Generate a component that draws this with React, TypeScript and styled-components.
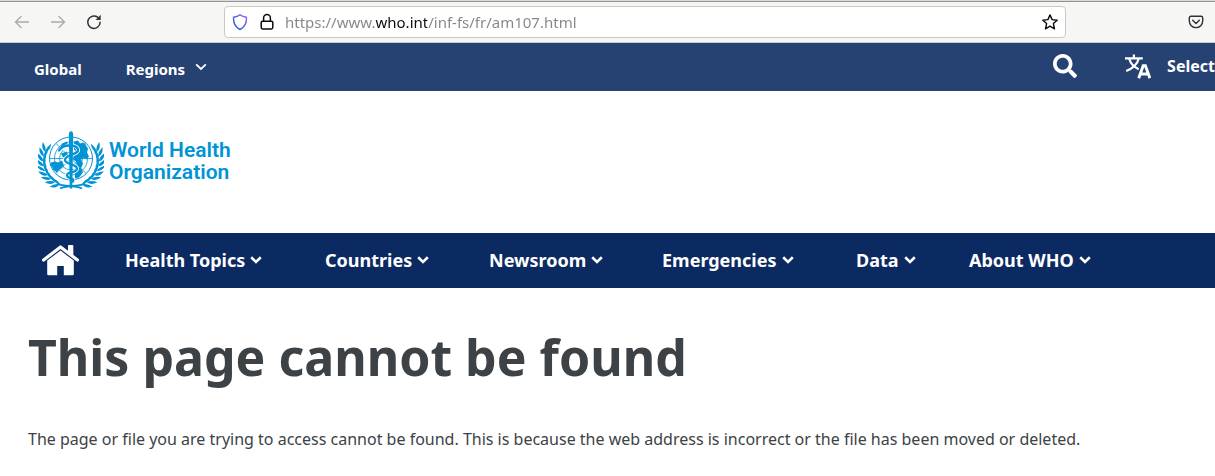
import React from "react";
import styled, { createGlobalStyle } from "styled-components";
import { FaSearch } from "react-icons/fa";

const GlobalStyle = createGlobalStyle`
  * { box-sizing: border-box; }
  body {
    margin: 0;
    background: #fff;
    color: #3c4245;
    font-family: "Noto Sans", "Open Sans", sans-serif;
    font-size: 16px;
    overflow-x: hidden;
  }
`;

const TabStrip = styled.div`
  height: 2px;
  background: #dedad7;
  border-bottom: 1px solid #979391;
`;

const Toolbar = styled.div`
  display: flex;
  align-items: center;
  height: 41px;
  padding: 0 10px 0 13px;
  background: #f6f6f4;
  border-bottom: 1px solid #cfcac4;
`;

const ToolGroup = styled.div`
  display: flex;
  gap: 18px;
  flex: 0 0 211px;
`;

const IconButton = styled.button<{ $color?: string }>`
  display: flex;
  padding: 0;
  border: 0;
  background: none;
  color: ${(p) => p.$color ?? "#2e3436"};
`;

const AddressBar = styled.form`
  display: flex;
  align-items: center;
  flex: 1;
  gap: 9px;
  height: 32px;
  padding: 0 6px;
  background: #fff;
  border: 1px solid #cdc7c2;
  border-radius: 4px;
`;

const AddressInput = styled.input`
  flex: 1;
  min-width: 0;
  height: 28px;
  padding: 0;
  border: 0;
  outline: 0;
  color: transparent;
  background: linear-gradient(90deg, #858585 90px, #0c0c0d 90px 142px, #858585 142px);
  background-clip: text;
  -webkit-background-clip: text;
  font: 15px "Noto Sans", sans-serif;
`;

const ToolEnd = styled.div`
  display: flex;
  justify-content: flex-end;
  flex: 0 0 139px;
`;

const TopBar = styled.div`
  display: flex;
  align-items: center;
  height: 48px;
  padding-left: 34px;
  background: #264273;
  color: #fff;
`;

const TopLinks = styled.nav`
  display: flex;
  align-items: center;
  gap: 44px;
  padding-top: 4px;
  font-size: 15px;
  font-weight: 700;
`;

const TopLink = styled.a`
  display: flex;
  color: inherit;
  text-decoration: none;
`;

const MenuButton = styled.button<{ $gap: number }>`
  display: flex;
  align-items: center;
  gap: ${(p) => p.$gap}px;
  padding: 0;
  border: 0;
  background: none;
  color: inherit;
  font: inherit;
  white-space: nowrap;
`;

const TopActions = styled.div`
  display: flex;
  align-items: center;
  gap: 48px;
  margin-left: auto;
  padding-bottom: 2px;
  font-size: 16px;
  font-weight: 700;
`;

const Header = styled.header`
  height: 142px;
  padding: 40px 38px;
`;

const LogoLink = styled.a`
  display: inline-flex;
  gap: 5px;
  color: #0093d5;
  text-decoration: none;
`;

const LogoText = styled.span`
  padding-top: 8px;
  font: 600 21px/22px Roboto, "Open Sans", sans-serif;
  white-space: nowrap;
`;

const MainNav = styled.nav`
  display: grid;
  grid-template-columns: 83px 200px 164px 173px 194px 113px auto;
  align-items: center;
  height: 55px;
  padding-left: 42px;
  background: #0c2a62;
  color: #fff;
  font-size: 18px;
  line-height: 24px;
  font-weight: 700;

  button {
    padding-bottom: 2px;
  }
`;

const Content = styled.main`
  padding: 35px 28px;
`;

const Title = styled.h1`
  margin: 0;
  font-size: 50px;
  line-height: 68px;
  font-weight: 700;
`;

const Message = styled.p`
  margin: 37px 0 0;
  line-height: 22px;
`;

const Chevron = ({ bold }: { bold?: boolean }) => (
  <svg
    width="12"
    height="12"
    viewBox={bold ? "0 -2 12 12" : "0 0 12 12"}
    fill="none"
    stroke="currentColor"
    strokeWidth={bold ? 2.6 : 1.8}
    aria-hidden="true"
  >
    <path d="M1.2 1.3 6 6l4.8-4.7" />
  </svg>
);

const Arrow = ({ back }: { back?: boolean }) => (
  <svg width="18" height="16" viewBox="0 0 18 16" fill="none" stroke="currentColor" strokeWidth="1.3" strokeLinecap="round" aria-hidden="true">
    <path d={back ? "M15.5 8H2.5M8 2.5 2.5 8 8 13.5" : "M2.5 8h13M10 2.5 15.5 8 10 13.5"} />
  </svg>
);

const Reload = () => (
  <svg width="18" height="16" viewBox="0 0 18 16" aria-hidden="true">
    <path d="M15.1 8.2A6.2 6.2 0 1 1 12.6 3.2" fill="none" stroke="currentColor" strokeWidth="1.5" strokeLinecap="round" />
    <path d="M15.7.8v5.1h-5.1z" fill="currentColor" />
  </svg>
);

const Shield = () => (
  <svg width="18" height="18" viewBox="0 0 18 18" aria-hidden="true">
    <defs>
      <linearGradient id="shield" x1="0" y1="1" x2="1" y2="0">
        <stop offset="0.2" stopColor="#2b62cf" />
        <stop offset="1" stopColor="#9d5cff" />
      </linearGradient>
    </defs>
    <path d="M9 1.8C7.4 3.1 5 4 2.5 4.3c-.2 5 1 9.700 6.500 12.200 5.500-2.500 6.700-7.200 6.500-12.200C13 4 10.600 3.100 9 1.800z" fill="none" stroke="url(#shield)" strokeWidth="1.4" strokeLinejoin="round" />
  </svg>
);

const Lock = () => (
  <svg width="18" height="18" viewBox="0 0 18 18" fill="none" stroke="#0c0c0d" strokeWidth="1.5" aria-hidden="true">
    <rect x="3.2" y="8.2" width="11.6" height="7.8" rx="1.4" />
    <path d="M5.6 8V5a3.4 3.4 0 0 1 6.8 0v3" />
  </svg>
);

const Star = () => (
  <svg width="18" height="18" viewBox="0 0 18 18" fill="none" stroke="#0c0c0d" strokeWidth="1.4" strokeLinejoin="round" aria-hidden="true">
    <path d="M9 1.9l2.1 4.7 5.1.6-3.8 3.4 1.1 5.2L9 13.2l-4.5 2.6 1.1-5.2L1.8 7.2l5.1-.6z" />
  </svg>
);

const Pocket = () => (
  <svg width="18" height="16" viewBox="0 0 18 16" fill="none" stroke="currentColor" strokeWidth="1.4" strokeLinecap="round" strokeLinejoin="round" aria-hidden="true">
    <path d="M4 2.2h10a1.7 1.7 0 0 1 1.7 1.7v3a6.7 6.7 0 0 1-13.4 0v-3A1.7 1.7 0 0 1 4 2.2z" />
    <path d="M5.7 6.2 9 9.4l3.3-3.2" />
  </svg>
);

const Translate = () => (
  <svg width="26" height="25" viewBox="0 0 26 25" fill="none" stroke="currentColor" aria-hidden="true">
    <path d="M0 4.3h17.8M8.9.4v3.9M13.8 4.5C12.5 9.5 7.5 14.5 1.2 17M4.3 5c1.5 5 4.7 8 9.4 10.2" strokeWidth="2.2" />
    <path d="M13.7 24.2 18.2 11.7h2.2l4.5 12.5M15.3 20h8" strokeWidth="2.9" />
  </svg>
);

const House = () => (
  <svg width="37" height="31" viewBox="0 0 37 31" fill="currentColor" aria-hidden="true">
    <path d="M1.6 15 18.5 2 35.4 15" fill="none" stroke="currentColor" strokeWidth="3.2" strokeLinecap="round" strokeLinejoin="round" />
    <path d="M26 .8q0-.8.8-.8h3.7q.8 0 .8.8v10.5L26 7.2z" />
    <path d="M5.2 15.5 18.5 5.6 31.8 15.5V29q0 1.3-1.3 1.3h-8.7v-9.2h-6.6v9.2H6.500q-1.300 0-1.300-1.300z" />
  </svg>
);

/* Nodes along the laurel stem, as angles clockwise from the right. */
const nodes = [114, 125, 136, 147, 158, 169, 180, 191, 202];

const Branch = () => (
  <g>
    {nodes.map((t) => {
      const x = 27.5 * Math.cos((t * Math.PI) / 180);
      const y = 3 + 25 * Math.sin((t * Math.PI) / 180);
      return (
        <g key={t} transform={`translate(${x} ${y}) rotate(${t + 90})`}>
          <path d="M0 0Q4-4 10.5-.5Q5 2 0 0z" transform="rotate(-34)" />
          <path d="M0 0Q4-2 10 0Q5 3.200 0 0z" transform="rotate(12)" />
        </g>
      );
    })}
    <path d="M11 30C3 26-6 29-14 25" fill="none" stroke="currentColor" strokeWidth="1.8" />
  </g>
);

const Emblem = () => (
  <svg width="66" height="58" viewBox="-33 -27.5 66 58" fill="currentColor" aria-hidden="true">
    <Branch />
    <g transform="scale(-1 1)"><Branch /></g>
    <circle r="22.5" fill="#fff" />
    <g fill="none" stroke="currentColor" strokeWidth="0.8">
      <circle r="21.5" strokeWidth="1" />
      <circle r="16.5" />
      <circle r="11.5" />
      <circle r="6.5" />
      <path d="M-21.5 0h43M-15.2-15.2l30.4 30.4M15.2-15.2l-30.4 30.4" />
    </g>
    <path d="M3-17l4-1 2 3 4-1 4 6-1 4 2 4-3 3-2-2-3 2 2 4-2 5-4-2-1-5-3-2 1-5 3-2-3-3zM-20 4l4-1 3 1 4-2 2 5-3 3-2 1-2 3-4-3-1-3-2-1zM4 10l6-1 2 5-4 5-4 1zM-9-15l5-2 1 4-4 2-4 1zM-10-5l6-2 1 4-5 2z" />
    <path d="M-8-8C-6-15 6-14 7-9S-5-4-6 1 6 5 6 10-5 13-4 17 4 19 2 23" fill="none" stroke="#fff" strokeWidth="4" />
    <path d="M-1.3 30-2.1-21h4.2L1.3 30z" />
    <ellipse cy="-23.5" rx="2.2" ry="3.8" />
    <path d="M-12-8C-8-15 6-14 7-9S-5-4-6 1 6 5 6 10-5 13-4 17 4 19 2 23" fill="none" stroke="currentColor" strokeWidth="2.3" strokeLinecap="round" />
  </svg>
);

const sections = ["Health Topics", "Countries", "Newsroom", "Emergencies", "Data", "About WHO"];

export default function App() {
  return (
    <>
      <GlobalStyle />
      <TabStrip />
      <Toolbar>
        <ToolGroup>
          <IconButton $color="#a9aaa9" aria-label="Back"><Arrow back /></IconButton>
          <IconButton $color="#a9aaa9" aria-label="Forward"><Arrow /></IconButton>
          <IconButton aria-label="Reload"><Reload /></IconButton>
        </ToolGroup>
        <AddressBar onSubmit={(e) => e.preventDefault()}>
          <IconButton type="button" aria-label="Tracking protection"><Shield /></IconButton>
          <IconButton type="button" aria-label="Connection secure"><Lock /></IconButton>
          <AddressInput aria-label="Address" defaultValue="https://www.who.int/inf-fs/fr/am107.html" />
          <IconButton type="button" aria-label="Bookmark this page"><Star /></IconButton>
        </AddressBar>
        <ToolEnd>
          <IconButton aria-label="Save to Pocket"><Pocket /></IconButton>
        </ToolEnd>
      </Toolbar>
      <TopBar>
        <TopLinks>
          <TopLink href="#global">Global</TopLink>
          <MenuButton $gap={10}>Regions <Chevron /></MenuButton>
        </TopLinks>
        <TopActions>
          <IconButton $color="#fff" aria-label="Search"><FaSearch size={24} /></IconButton>
          <MenuButton $gap={16}><Translate />Select</MenuButton>
        </TopActions>
      </TopBar>
      <Header>
        <LogoLink href="#home" aria-label="World Health Organization">
          <Emblem />
          <LogoText>World Health<br />Organization</LogoText>
        </LogoLink>
      </Header>
      <MainNav>
        <TopLink href="#home" aria-label="Home"><House /></TopLink>
        {sections.map((s) => (
          <MenuButton key={s} $gap={5}>{s}<Chevron bold /></MenuButton>
        ))}
      </MainNav>
      <Content>
        <Title>This page cannot be found</Title>
        <Message>The page or file you are trying to access cannot be found. This is because the web address is incorrect or the file has been moved or deleted.</Message>
      </Content>
    </>
  );
}
